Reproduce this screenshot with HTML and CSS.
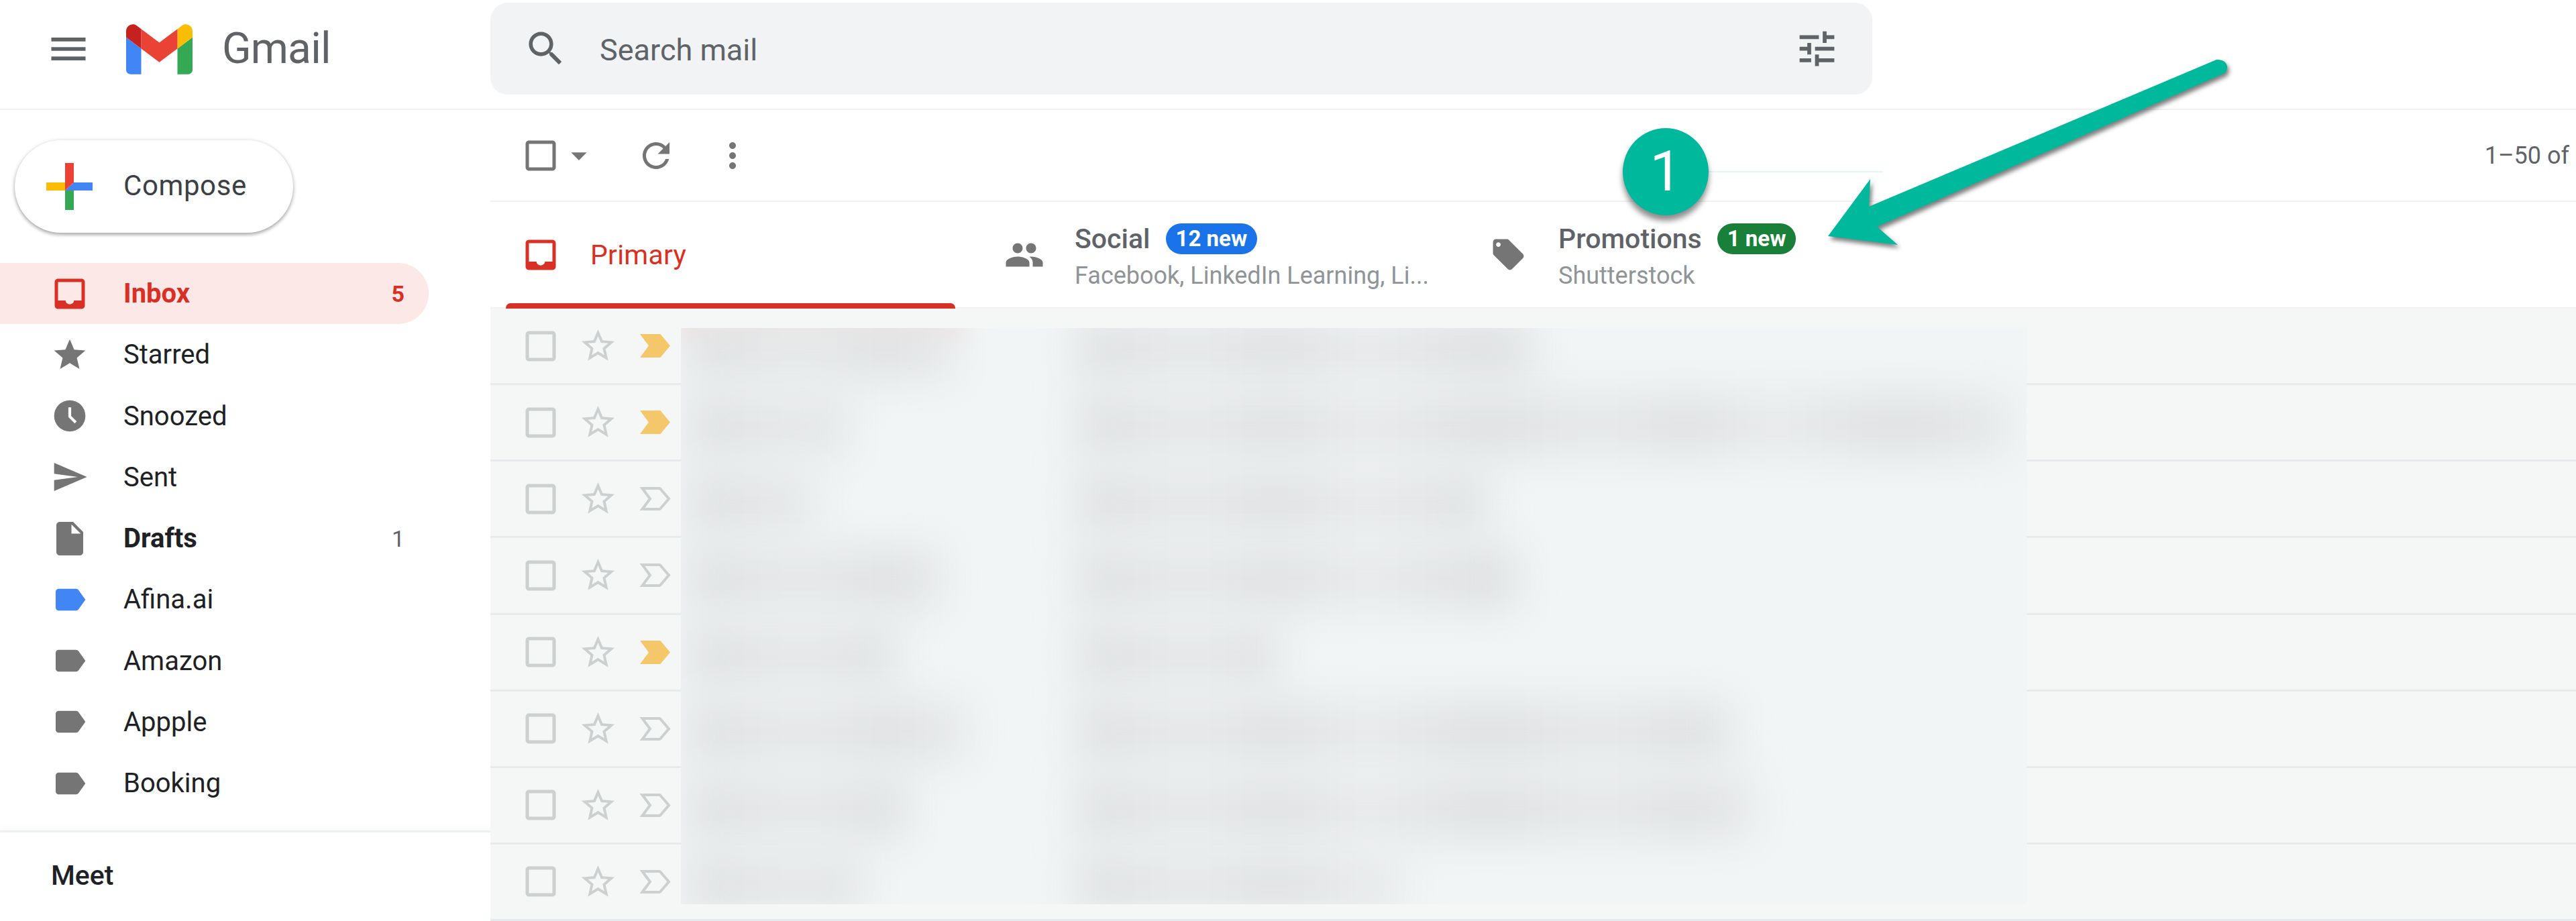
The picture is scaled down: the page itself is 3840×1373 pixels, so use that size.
FILE: index.html
```html
<!DOCTYPE html>
<html lang="en">
<head>
    <meta charset="UTF-8">
    <title>Gmail</title>
    <link rel="stylesheet" href="styles.css">
</head>
<body>

<svg class="defs" width="0" height="0">
    <symbol id="i-check" viewBox="0 0 24 24"><path d="M19 5v14H5V5h14m0-2H5c-1.1 0-2 .9-2 2v14c0 1.1.9 2 2 2h14c1.1 0 2-.9 2-2V5c0-1.1-.9-2-2-2z"/></symbol>
    <symbol id="i-star" viewBox="0 0 24 24"><path d="M22 9.24l-7.19-.62L12 2 9.19 8.63 2 9.24l5.46 4.73L5.82 21 12 17.27 18.18 21l-1.63-7.03L22 9.24zM12 15.4l-3.76 2.27 1-4.28-3.32-2.88 4.38-.38L12 6.1l1.71 4.04 4.38.38-3.32 2.88 1 4.28L12 15.4z"/></symbol>
    <symbol id="i-label" viewBox="0 0 24 24"><path d="M17.63 5.84C17.27 5.33 16.67 5 16 5L5 5.01C3.9 5.01 3 5.9 3 7v10c0 1.1.9 1.99 2 1.99L16 19c.67 0 1.27-.33 1.63-.84L22 12l-4.37-6.16z"/></symbol>
    <symbol id="i-inbox" viewBox="0 0 24 24"><path d="M19 3H5c-1.1 0-2 .9-2 2v14c0 1.1.9 2 2 2h14c1.1 0 2-.9 2-2V5c0-1.1-.9-2-2-2zm0 13h-4.5c0 1.2-1.1 2.2-2.5 2.2s-2.500-1-2.500-2.200H5V5h14v11z"/></symbol>
    <symbol id="i-flag" viewBox="0 0 46 35"><path d="M0 0h29c1.500 0 2.500.6 3 2l13 15.500L32 33c-.5 1.400-1.500 2-3 2H0l13-17.500z"/></symbol>
    <symbol id="i-flag-o" viewBox="0 0 46 35"><path fill="none" stroke-width="4" d="M3.500 2H29c1 0 1.500.4 2 1.500l12 14-12 14c-.5 1.100-1 1.500-2 1.500H3.500L15 17.500z"/></symbol>
</svg>

<header class="header">
    <div class="brand">
        <svg class="menu-icon" viewBox="0 0 24 24"><path d="M3 18h18v-2H3v2zm0-5h18v-2H3v2zm0-7v2h18V6H3z"/></svg>
        <svg class="logo" viewBox="52 42 88 66">
            <path fill="#4285f4" d="M58 108h14V74L52 59v43c0 3.320 2.690 6 6 6"/>
            <path fill="#34a853" d="M120 108h14c3.320 0 6-2.690 6-6V59l-20 15"/>
            <path fill="#fbbc04" d="M120 48v26l20-15v-8c0-7.420-8.470-11.650-14.400-7.200"/>
            <path fill="#ea4335" d="M72 74V48l24 18 24-18v26L96 92"/>
            <path fill="#c5221f" d="M52 51v8l20 15V48l-5.600-4.200c-5.940-4.450-14.400-.22-14.400 7.200"/>
        </svg>
        <span class="wordmark">Gmail</span>
    </div>
    <div class="search">
        <svg class="search-icon" viewBox="0 0 24 24"><path d="M15.500 14h-.79l-.28-.27C15.410 12.590 16 11.110 16 9.500 16 5.910 13.090 3 9.500 3S3 5.910 3 9.500 5.910 16 9.500 16c1.610 0 3.090-.59 4.230-1.570l.27.28v.79l5 4.990L20.490 19l-4.990-5zm-6 0C7.010 14 5 11.990 5 9.500S7.010 5 9.500 5 14 7.010 14 9.500 11.990 14 9.500 14z"/></svg>
        <span class="search-text">Search mail</span>
        <svg class="tune-icon" viewBox="0 0 24 24"><path d="M3 17v2h6v-2H3zM3 5v2h10V5H3zm10 16v-2h8v-2h-8v-2h-2v6h2zM7 9v2H3v2h4v2h2V9H7zm14 4v-2H11v2h10zm-6-4h2V7h4V5h-4V3h-2v6z"/></svg>
    </div>
</header>

<div class="app">
    <aside class="sidebar">
        <button class="compose">
            <svg class="compose-plus" viewBox="0 0 69 70">
                <rect x="0" y="29" width="29" height="12" fill="#fbbc04"/>
                <rect x="28" y="0" width="13" height="30" fill="#ea4335"/>
                <rect x="28" y="41" width="13" height="29" fill="#34a853"/>
                <rect x="41" y="29" width="28" height="12" fill="#4285f4"/>
                <path d="M28 41l13-12v12z" fill="#4285f4"/>
                <path d="M28 29h13L28 41z" fill="#ea4335"/>
            </svg>
            <span class="compose-text">Compose</span>
        </button>

        <nav class="nav">
            <a class="nav-item active"><span class="nav-icon"><svg class="ic-60"><use href="#i-inbox"/></svg></span><span class="nav-name">Inbox</span><span class="nav-count">5</span></a>
            <a class="nav-item"><span class="nav-icon"><svg class="ic-56" viewBox="0 0 24 24"><path d="M12 17.270L18.180 21l-1.640-7.030L22 9.240l-7.190-.61L12 2 9.190 8.630 2 9.240l5.460 4.730L5.820 21z"/></svg></span><span class="nav-name">Starred</span></a>
            <a class="nav-item"><span class="nav-icon"><svg class="ic-56" viewBox="0 0 24 24"><circle cx="12" cy="12" r="10"/><path class="clock-hand" d="M12 6.500v5.900l3.800 3.800"/></svg></span><span class="nav-name">Snoozed</span></a>
            <a class="nav-item"><span class="nav-icon"><svg class="ic-56" viewBox="0 0 24 24"><path d="M2.010 21L23 12 2.010 3 2 10l15 2-15 2z"/></svg></span><span class="nav-name">Sent</span></a>
            <a class="nav-item bold"><span class="nav-icon"><svg class="ic-60" viewBox="0 0 24 24"><path d="M6 2c-1.100 0-2 .9-2 2v16c0 1.100.9 2 2 2h12c1.100 0 2-.9 2-2V8l-6-6H6zm7 7V3.500L18.500 9H13z"/></svg></span><span class="nav-name">Drafts</span><span class="nav-count">1</span></a>
            <a class="nav-item"><span class="nav-icon blue"><svg class="ic-56"><use href="#i-label"/></svg></span><span class="nav-name">Afina.ai</span></a>
            <a class="nav-item"><span class="nav-icon"><svg class="ic-56"><use href="#i-label"/></svg></span><span class="nav-name">Amazon</span></a>
            <a class="nav-item"><span class="nav-icon"><svg class="ic-56"><use href="#i-label"/></svg></span><span class="nav-name">Appple</span></a>
            <a class="nav-item"><span class="nav-icon"><svg class="ic-56"><use href="#i-label"/></svg></span><span class="nav-name">Booking</span></a>
        </nav>

        <div class="meet">Meet</div>
    </aside>

    <main class="main">
        <div class="toolbar">
            <svg class="ic-60"><use href="#i-check"/></svg>
            <svg class="ic-56 caret" viewBox="0 0 24 24"><path d="M7 10l5 5 5-5z"/></svg>
            <svg class="ic-60 refresh" viewBox="0 0 24 24"><path d="M17.650 6.350C16.200 4.900 14.210 4 12 4c-4.420 0-7.990 3.580-7.990 8s3.570 8 7.990 8c3.730 0 6.840-2.550 7.730-6h-2.080c-.82 2.330-3.040 4-5.650 4-3.310 0-6-2.690-6-6s2.690-6 6-6c1.660 0 3.140.69 4.220 1.780L13 11h7V4l-2.350 2.350z"/></svg>
            <svg class="ic-60 more" viewBox="0 0 24 24"><path d="M12 8c1.100 0 2-.9 2-2s-.9-2-2-2-2 .9-2 2 .9 2 2 2zm0 2c-1.100 0-2 .9-2 2s.9 2 2 2 2-.9 2-2-.9-2-2-2zm0 6c-1.100 0-2 .9-2 2s.9 2 2 2 2-.9 2-2-.9-2-2-2z"/></svg>
            <span class="pager">1–50 of</span>
        </div>

        <div class="tabs">
            <div class="tab selected">
                <svg class="ic-60"><use href="#i-inbox"/></svg>
                <span class="tab-title">Primary</span>
            </div>
            <div class="tab">
                <svg class="ic-60" viewBox="0 0 24 24"><path d="M16 11c1.660 0 2.990-1.340 2.990-3S17.660 5 16 5c-1.660 0-3 1.340-3 3s1.340 3 3 3zm-8 0c1.660 0 2.990-1.340 2.990-3S9.660 5 8 5C6.340 5 5 6.340 5 8s1.340 3 3 3zm0 2c-2.330 0-7 1.170-7 3.500V19h14v-2.500c0-2.330-4.670-3.500-7-3.500zm8 0c-.29 0-.62.02-.97.05 1.160.84 1.970 1.970 1.970 3.450V19h6v-2.500c0-2.330-4.670-3.500-7-3.500z"/></svg>
                <div class="tab-text">
                    <div class="tab-line"><span class="tab-title">Social</span><span class="badge badge-blue">12 new</span></div>
                    <div class="tab-sub">Facebook, LinkedIn Learning, Li...</div>
                </div>
            </div>
            <div class="tab">
                <svg class="ic-tag" viewBox="0 0 24 24"><path d="M21.410 11.580l-9-9C12.050 2.220 11.550 2 11 2H4c-1.100 0-2 .9-2 2v7c0 .55.22 1.050.59 1.420l9 9c.36.36.86.58 1.410.58.55 0 1.050-.22 1.410-.59l7-7c.37-.36.59-.86.59-1.410 0-.55-.23-1.060-.59-1.420zM5.500 7C4.670 7 4 6.330 4 5.500S4.670 4 5.500 4 7 4.670 7 5.500 6.330 7 5.500 7z"/></svg>
                <div class="tab-text">
                    <div class="tab-line"><span class="tab-title">Promotions</span><span class="badge badge-green">1 new</span></div>
                    <div class="tab-sub">Shutterstock</div>
                </div>
            </div>
        </div>

        <div class="list">
            <div class="row"><svg class="ic-60"><use href="#i-check"/></svg><svg class="ic-star"><use href="#i-star"/></svg><svg class="flag on"><use href="#i-flag"/></svg></div>
            <div class="row"><svg class="ic-60"><use href="#i-check"/></svg><svg class="ic-star"><use href="#i-star"/></svg><svg class="flag on"><use href="#i-flag"/></svg></div>
            <div class="row"><svg class="ic-60"><use href="#i-check"/></svg><svg class="ic-star"><use href="#i-star"/></svg><svg class="flag"><use href="#i-flag-o"/></svg></div>
            <div class="row"><svg class="ic-60"><use href="#i-check"/></svg><svg class="ic-star"><use href="#i-star"/></svg><svg class="flag"><use href="#i-flag-o"/></svg></div>
            <div class="row"><svg class="ic-60"><use href="#i-check"/></svg><svg class="ic-star"><use href="#i-star"/></svg><svg class="flag on"><use href="#i-flag"/></svg></div>
            <div class="row"><svg class="ic-60"><use href="#i-check"/></svg><svg class="ic-star"><use href="#i-star"/></svg><svg class="flag"><use href="#i-flag-o"/></svg></div>
            <div class="row"><svg class="ic-60"><use href="#i-check"/></svg><svg class="ic-star"><use href="#i-star"/></svg><svg class="flag"><use href="#i-flag-o"/></svg></div>
            <div class="row"><svg class="ic-60"><use href="#i-check"/></svg><svg class="ic-star"><use href="#i-star"/></svg><svg class="flag"><use href="#i-flag-o"/></svg></div>

            <!-- blurred message text lies over the rows -->
            <div class="blur-box">
                <div class="blur-pink"></div>
                <div class="blur-rows">
                    <div class="blur-row"><i class="from f1"></i><i class="subj s1"></i></div>
                    <div class="blur-row"><i class="from f2"></i><i class="subj s2"></i></div>
                    <div class="blur-row"><i class="from f3"></i><i class="subj s3"></i></div>
                    <div class="blur-row"><i class="from f4"></i><i class="subj s4"></i></div>
                    <div class="blur-row"><i class="from f5"></i><i class="subj s5"></i></div>
                    <div class="blur-row"><i class="from f6"></i><i class="subj s6"></i></div>
                    <div class="blur-row"><i class="from f7"></i><i class="subj s7"></i></div>
                    <div class="blur-row"><i class="from f8"></i><i class="subj s8"></i></div>
                </div>
            </div>
        </div>
    </main>
</div>

<!-- annotation on top of the screenshot -->
<div class="callout-line"></div>
<div class="callout">1</div>
<svg class="arrow" viewBox="2700 70 640 310">
    <path d="M3304 89L2786 308l2-41-63 85 104 13-31-27L3316 109c7-6 6-21-12-20z"/>
</svg>

</body>
</html>
```

FILE: styles.css
```css
html, body {
    margin: 0;
    height: 100%;
}

body {
    position: relative;
    width: 3840px;
    height: 1373px;
    overflow: hidden;
    background: #fff;
    font-family: Roboto, "Liberation Sans", sans-serif;
    color: #202124;
}

svg {
    fill: currentColor;
    flex: none;
    display: block;
}

.defs {
    position: absolute;
}

.ic-60 {
    width: 60px;
    height: 60px;
}

.ic-56 {
    width: 56px;
    height: 56px;
}

/* header */
.header {
    display: flex;
    height: 162px;
    border-bottom: 2px solid #eff1f3;
}

.brand {
    display: flex;
    align-items: center;
    flex: none;
    width: 731px;
    padding-bottom: 16px;
    box-sizing: border-box;
}

.menu-icon {
    width: 68px;
    height: 68px;
    margin-left: 68px;
    color: #5f6368;
}

.logo {
    width: 99px;
    height: 75px;
    margin-left: 52px;
}

.wordmark {
    margin-left: 44px;
    font-size: 64px;
    line-height: 1;
    color: #5f6368;
    letter-spacing: -.8px;
}

.search {
    display: flex;
    align-items: center;
    width: 2060px;
    height: 137px;
    margin-top: 4px;
    padding: 0 48px 0 49px;
    box-sizing: border-box;
    background: #f1f3f4;
    border-radius: 26px;
}

.search-icon {
    width: 67px;
    height: 67px;
    color: #5f6368;
}

.search-text {
    margin-left: 47px;
    margin-top: 3px;
    font-size: 45px;
    color: #5f6368;
}

.tune-icon {
    width: 69px;
    height: 69px;
    margin-left: auto;
    color: #5f6368;
}

.app {
    display: flex;
    height: 1209px;
}

/* left column */
.sidebar {
    display: flex;
    flex-direction: column;
    flex: none;
    width: 731px;
}

.compose {
    display: flex;
    align-items: center;
    width: 415px;
    height: 138px;
    margin: 45px 0 45px 22px;
    padding: 0 0 0 47px;
    background: #fff;
    border: none;
    border-radius: 69px;
    box-shadow: 0 3px 5px rgba(60, 64, 67, .35), 0 1px 6px rgba(60, 64, 67, .2);
    font-family: inherit;
    font-size: 42px;
    letter-spacing: .6px;
    color: #3c4043;
}

.compose-plus {
    width: 69px;
    height: 70px;
    margin-right: 46px;
}

.compose-text {
    margin-bottom: 3px;
}

.nav-item {
    display: flex;
    align-items: center;
    width: 639px;
    height: 91.25px;
    padding-right: 36px;
    box-sizing: border-box;
    border-radius: 0 46px 46px 0;
    font-size: 40px;
    color: #202124;
}

.nav-icon {
    display: flex;
    justify-content: center;
    width: 60px;
    margin-left: 74px;
    margin-right: 50px;
    color: #757575;
}

.nav-icon.blue {
    color: #4285f4;
}

.clock-hand {
    fill: none;
    stroke: #fff;
    stroke-width: 1.800;
}

.nav-count {
    margin-left: auto;
    font-size: 34px;
    color: #5f6368;
}

.nav-item.active {
    background: #fce8e6;
    color: #d93025;
    font-weight: 700;
}

.nav-item.active .nav-icon,
.nav-item.active .nav-count {
    color: #d93025;
}

.nav-item.bold .nav-name {
    font-weight: 700;
}

.meet {
    margin-top: auto;
    height: 135px;
    padding: 40px 0 0 76px;
    box-sizing: border-box;
    border-top: 3px solid #eef0f2;
    box-shadow: 0 -4px 6px rgba(60, 64, 67, .04);
    font-size: 41px;
    font-weight: 500;
}

/* right column */
.main {
    flex: 1;
    display: flex;
    flex-direction: column;
    color: #757575;
}

.toolbar {
    display: flex;
    flex: none;
    align-items: center;
    height: 135px;
    padding: 0 10px 0 45px;
    border-bottom: 2px solid #eff1f3;
}

.caret {
    margin-left: -1px;
}

.refresh {
    margin-left: 57px;
}

.more {
    margin-left: 54px;
}

.pager {
    margin-left: auto;
    font-size: 36px;
    color: #5f6368;
}

.tabs {
    display: flex;
    flex: none;
    height: 157px;
    border-bottom: 2px solid #eff1f3;
}

.tab {
    position: relative;
    display: flex;
    align-items: center;
    box-sizing: border-box;
    width: 721px;
    padding-left: 45px;
    color: #757575;
}

.tab-text {
    margin-top: 8px;
}

.tab svg {
    margin-right: 45px;
}

.tab .ic-tag {
    width: 55px;
    height: 55px;
    margin-left: 3px;
    margin-right: 47px;
}

.tab-line {
    display: flex;
    align-items: center;
    height: 46px;
    margin-bottom: 9px;
}

.tab-title {
    font-size: 41px;
    font-weight: 500;
    color: #5f6368;
}

.tab-sub {
    font-size: 36px;
    line-height: 46px;
    color: #8f9498;
}

.badge {
    margin-left: 23px;
    padding: 0 15px;
    height: 46px;
    border-radius: 23px;
    font-size: 33px;
    font-weight: 700;
    line-height: 46px;
    color: #fff;
}

.badge-blue {
    background: #1a73e8;
}

.badge-green {
    background: #188038;
}

.tab.selected {
    color: #d93025;
}

.tab.selected .tab-title {
    color: #d93025;
    margin-left: -1px;
    font-size: 41px;
    font-weight: 400;
    letter-spacing: .2px;
}

.tab.selected::after {
    content: "";
    position: absolute;
    left: 23px;
    bottom: -2px;
    width: 670px;
    height: 8px;
    background: #d93025;
    border-radius: 7px 7px 0 0;
}

.list {
    position: relative;
    flex: 1;
    display: grid;
    grid-auto-rows: 1fr;
    background: #f5f7f7;
    color: #cdd0d0;
}

.row {
    display: flex;
    align-items: center;
    padding-left: 45px;
    border-bottom: 3px solid #e8ebee;
}

.ic-star {
    width: 59px;
    height: 59px;
    margin-left: 26px;
}

.flag {
    width: 46px;
    height: 35px;
    margin-left: 33px;
    stroke: currentColor;
}

.flag.on {
    color: #f4c76a;
    stroke: none;
}

/* blurred text */
.blur-box {
    position: absolute;
    left: 284px;
    top: 29px;
    width: 2006px;
    height: 859px;
    overflow: hidden;
    background: #f2f5f6;
}

.blur-pink {
    position: absolute;
    left: 0;
    top: -14px;
    width: 420px;
    height: 30px;
    background: #f3e2df;
    filter: blur(14px);
}

.blur-rows {
    display: grid;
    grid-auto-rows: 114.300px;
    margin-top: -27px;
}

.blur-row {
    position: relative;
}

/* broad lumps so the smudge does not read as a plain bar */
.from, .subj {
    position: absolute;
    top: 10px;
    height: 94px;
    background: repeating-linear-gradient(90deg, #dfe1e2 0, #e6e8e9 170px, #e0e2e3 300px, #e8eaeb 430px, #dfe1e2 610px);
    filter: blur(30px);
}

.from { left: 10px; }
.subj { left: 590px; }

.f1 { width: 400px; }
.f2 { width: 240px; }
.f3 { width: 190px; }
.f4 { width: 380px; }
.f5 { width: 310px; }
.f6 { width: 420px; }
.f7 { width: 330px; }
.f8 { width: 260px; }

.s1 { width: 680px; }
.s2 { width: 1390px; }
.s3 { width: 610px; }
.s4 { width: 660px; }
.s5 { width: 300px; }
.s6 { width: 980px; }
.s7 { width: 1010px; }
.s8 { width: 480px; }

/* annotation */
.callout {
    position: absolute;
    left: 2419px;
    top: 191px;
    width: 128px;
    height: 130px;
    border-radius: 50%;
    background: #00b89c;
    box-shadow: 0 8px 8px rgba(0, 0, 0, .45);
    color: #fff;
    font-size: 84px;
    line-height: 130px;
    text-align: center;
}

.callout-line {
    position: absolute;
    left: 2512px;
    top: 255px;
    width: 295px;
    height: 2px;
    background: rgba(0, 184, 156, .12);
    z-index: 1;
}

.arrow {
    position: absolute;
    left: 2700px;
    top: 70px;
    width: 640px;
    height: 310px;
    fill: #00b89c;
    filter: drop-shadow(3px 5px 3px rgba(0, 0, 0, .5));
}
```
